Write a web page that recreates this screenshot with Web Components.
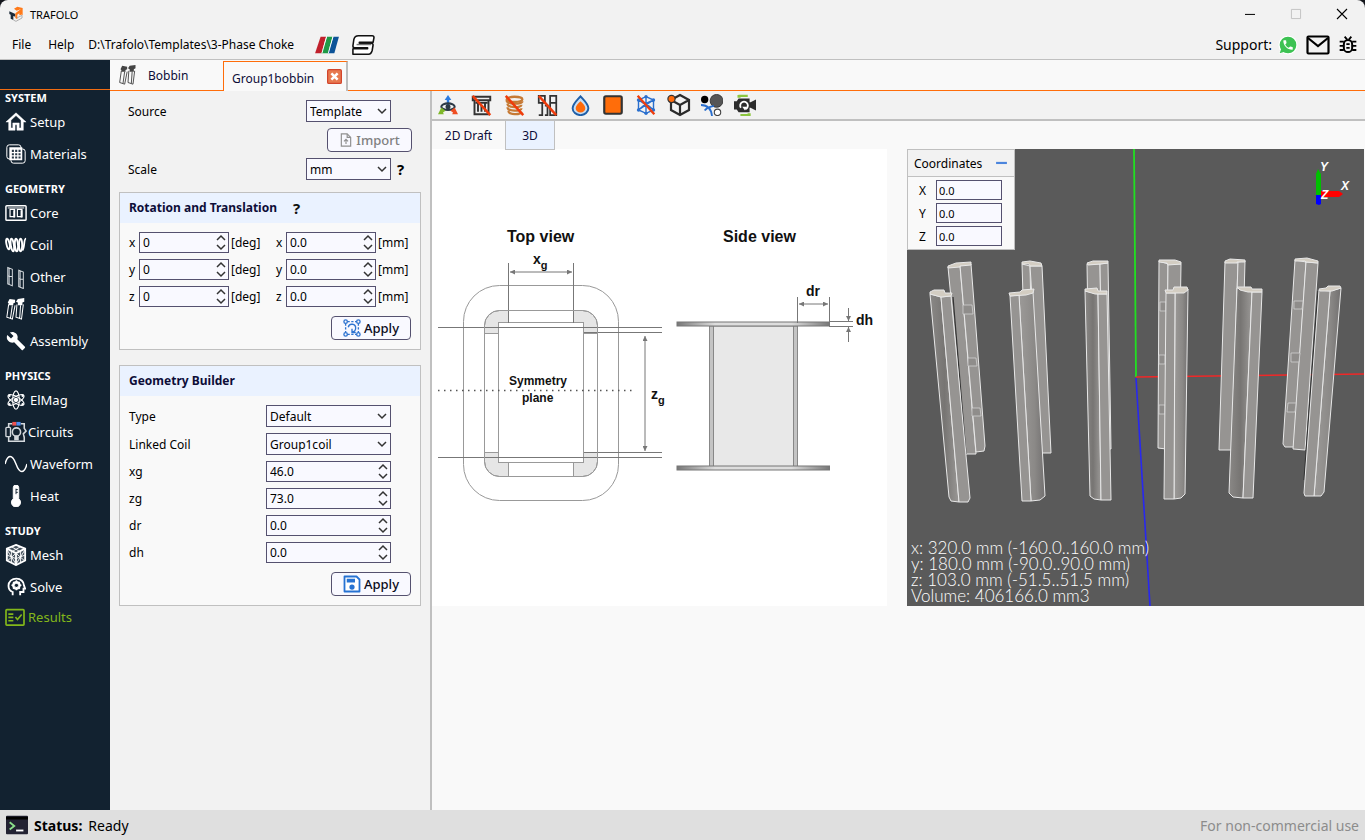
<!DOCTYPE html>
<html lang="en">
<head>
<meta charset="utf-8">
<title>TRAFOLO</title>
<style>
  html { background: #14161c; }
  body { margin: 0; font-family: "Noto Sans", sans-serif; font-size: 12px; color: #000; }
</style>
</head>
<body>
<trafolo-app></trafolo-app>
<script>
const slash = '<path d="M2 1L22 23" stroke="#ef3c0c" stroke-width="2.8"/>';
const ICONS = {
  logo: '<path d="M2 8l9 4v4l-3-1v6l-4-2v-6l-2-1z" fill="#1c2b3a"/><path d="M11 11l9-7v9l-3 1v-3l-3 2v7l-3-2z" fill="#ff7a1a"/><path d="M9 4l5-3 8 2v11l-3-2V5l-6 2z" fill="#ff7a1a"/><path d="M8 21l4 2 9-5v-4l-8 4" fill="none" stroke="#aaa" stroke-width="1.4"/>',
  stripes: '<path d="M6 3h6L7 21H0z" fill="#c0202c"/><path d="M13 3h6l-5 18H7z" fill="#1f9a47"/><path d="M20 3h6l-5 18h-7z" fill="#0c5398"/><path d="M12 3h1L8 21H7zM19 3h1l-5 18h-1z" fill="#fff"/>',
  sletter: '<path d="M8 2h15q2 0 2 2l-1 5H9v1h13q2 0 2 2l-1 6q-1 4-4 4H2l0-6h16v-1H4q-2 0-2-2l1-7q1-4 5-4z" fill="#fff" stroke="#111" stroke-width="1.700" stroke-linejoin="round"/><path d="M6 11.500h16" stroke="#777" stroke-width="1.500"/>',
  min: '<path d="M6 12.500h12" stroke="#000" stroke-width="1.2"/>',
  max: '<path d="M6.500 6.500h11v11h-11z" fill="none" stroke="#c4c4c4" stroke-width="1.2"/>',
  close: '<path d="M6 6l12 12M18 6L6 18" stroke="#000" stroke-width="1.300"/>',
  whatsapp: '<circle cx="12" cy="12" r="11.500" fill="#fff"/><path d="M1 23l2-6 5 4z" fill="#fff"/><circle cx="12" cy="12" r="10" fill="#3dc253"/><path d="M2 22l2-6 4 4z" fill="#3dc253"/><path transform="translate(4.500 4.500) scale(.63)" d="M6.620 10.790c1.440 2.830 3.760 5.140 6.590 6.590l2.200-2.200c.27-.27.67-.36 1.020-.24 1.120.37 2.330.57 3.570.57.55 0 1 .45 1 1V20c0 .55-.45 1-1 1-9.390 0-17-7.610-17-17 0-.55.45-1 1-1h3.500c.55 0 1 .45 1 1 0 1.250.2 2.450.57 3.570.11.35.03.74-.25 1.020z" fill="#fff"/>',
  mail: '<rect x="1.500" y="3.500" width="21" height="17" rx="1" fill="none" stroke="#000" stroke-width="2.200"/><path d="M2 5l10 8 10-8" fill="none" stroke="#000" stroke-width="2.200"/>',
  bug: '<rect x="7" y="6" width="10" height="14.500" rx="5" fill="none" stroke="#000" stroke-width="2.400"/><path d="M8 2l3 3.500M16 2l-3 3.500M2 8h5M17 8h5M2 13h5M17 13h5M2 18h5M17 18h5M10 11h4M10 15.500h4" stroke="#000" stroke-width="2.200"/>',
  home: '<path d="M12 2L1 12h3v9h7v-6h2v6h7v-9h3zm0 3l5.500 5v8.500h-2V13h-7v5.500h-2V10z" fill="#fff" stroke="#fff" stroke-width=".5"/>',
  materials: '<g fill="none" stroke="#fff" stroke-width="1.200"><rect x="1" y="1" width="17" height="17" rx="3"/><rect x="6" y="6" width="17" height="17" rx="3"/></g><path d="M4 4h15.500v15.500H4z" fill="#fff"/><path d="M7 7h2.500v2.500H7zM11 7h2.500v2.500H11zM15 7h2.500v2.500H15zM7 11h2.500v2.500H7zM11 11h2.500v2.500H11zM15 11h2.500v2.500H15zM7 15h2.500v2.500H7zM11 15h2.500v2.500H11zM15 15h2.500v2.500H15z" fill="#2a3a48"/>',
  core: '<rect x="1" y="4" width="22" height="16" rx="1" fill="none" stroke="#fff" stroke-width="1.600"/><path d="M3 6.500h18" stroke="#fff" stroke-width="1"/><path d="M5.500 8h5v8h-5zM13.500 8h5v8h-5z" fill="none" stroke="#fff" stroke-width="1.300"/><path d="M9 9h2v8H9zM17 9h2v8h-2z" fill="#fff"/>',
  coil: '<g fill="none" stroke="#fff" stroke-width="2"><ellipse cx="3.500" cy="11" rx="1.700" ry="6" transform="rotate(-12 3 12)"/><ellipse cx="8" cy="12" rx="1.700" ry="7" transform="rotate(-8 8 12)"/><ellipse cx="12.500" cy="12" rx="1.700" ry="7" transform="rotate(-4 12 12)"/><ellipse cx="17" cy="12" rx="1.700" ry="7"/><path d="M23 5c-3 0-1 9-4 13"/></g>',
  other: '<g fill="none" stroke="#d3d8dc" stroke-width="1.100"><path d="M3 1l5 2v18l-5-2zM4.500 2v18M3 10l5 1M15 4l5 2v18l-5-2zM16.500 5v18M15 13l5 1"/></g>',
  bobbin: '<path d="M5 1l6 1v3l-2 1v2H4V6L3 5zM14 1l7-1v4l-2 1v3h-5V5l-2-1z" fill="currentColor"/><path d="M4 7L2 21l6 2 3-15M13 7l-1 14 6 2 2-16M8 8L6 22M17 8l-1 14" fill="none" stroke="currentColor" stroke-width="1.100"/>',
  wrench: '<path d="M22.700 19l-9.100-9.100c.9-2.300.4-5-1.500-6.900-2-2-5-2.400-7.400-1.300L9 6 6 9 1.600 4.700C.4 7.100.9 10.100 2.900 12.100c1.900 1.900 4.600 2.400 6.900 1.500l9.100 9.100c.4.4 1 .4 1.400 0l2.300-2.300c.5-.4.5-1.100.1-1.400z" fill="#fff"/>',
  atom: '<g fill="none" stroke="#fff" stroke-width="1.300"><ellipse cx="12" cy="12" rx="4" ry="11"/><ellipse cx="12" cy="12" rx="4" ry="11" transform="rotate(60 12 12)"/><ellipse cx="12" cy="12" rx="4" ry="11" transform="rotate(120 12 12)"/></g><circle cx="12" cy="12" r="2.600" fill="#fff"/><g fill="#fff"><circle cx="4" cy="7" r="1.500"/><circle cx="20" cy="7" r="1.500"/><circle cx="4" cy="17" r="1.500"/><circle cx="20" cy="17" r="1.500"/></g>',
  circuits: '<path d="M8 3H4v4M4 17v5h17v-5M17 3h4v5l2 3-3 3 1 4" fill="none" stroke="#d3d8dc" stroke-width="1.700"/><rect x="1" y="7" width="5" height="10" rx="1" fill="none" stroke="#d3d8dc" stroke-width="1.500"/><rect x="8" y="1" width="4.500" height="4" fill="#f0524f"/><rect x="12.500" y="1" width="4.500" height="4" fill="#4b8df0"/><circle cx="12.500" cy="12" r="4.500" fill="none" stroke="#d3d8dc" stroke-width="1.700"/><path d="M10 16h5v5h-5z" fill="#d3d8dc"/>',
  wave: '<path d="M0 12C3 1 8 1 12 12s9 11 12 0" fill="none" stroke="#fff" stroke-width="1.600"/>',
  heat: '<path d="M9 3a3 3 0 0 1 6 0v12a5 5 0 1 1-6 0z" fill="#fff" stroke="#fff"/><path d="M12 4v6M12 5h2M12 8h2" stroke="#122230" stroke-width="1"/>',
  mesh: '<path d="M12 1l10 4v13l-10 5-10-5V5z" fill="#44515c" stroke="#fff" stroke-width="2"/><path d="M2 5l10 5 10-5M12 10v13" fill="none" stroke="#fff" stroke-width="2"/><path d="M7 3l9 5M17 3L8 8M2 12l10 4 10-4M7 8v12M17 8v12M2 6l10 16M22 6L12 22M3 18l8-7M21 18l-8-7" fill="none" stroke="#fff" stroke-width="1"/>',
  solve: '<path d="M8 22v-4c-3-1-5-4-5-7.500C3 5.500 7 2 12.500 2 18 2 21.500 6 21.500 10l1.500 4h-2v4h-4v4" fill="none" stroke="#fff" stroke-width="2.200"/><circle cx="12.500" cy="10" r="4" fill="none" stroke="#fff" stroke-width="2.500"/><g stroke="#fff" stroke-width="1.800"><path d="M12.500 4v12M6.500 10h12M8.500 6l8 8M16.500 6l-8 8"/></g><circle cx="12.500" cy="10" r="2" fill="#122230"/>',
  results: '<rect x="1.200" y="3.200" width="21.600" height="18.600" rx="1" fill="none" stroke="#83b81a" stroke-width="2"/><path d="M4 8.500h6M4 12.500h6M4 16.500h6" stroke="#83b81a" stroke-width="2"/><path d="M12.500 12l2.500 3 5-6" fill="none" stroke="#83b81a" stroke-width="2"/>',
  tabclose: '<rect x="1" y="1" width="22" height="22" rx="2" fill="#e87a50" stroke="#d2452c" stroke-width="2"/><path d="M7 7l10 10M17 7L7 17" stroke="#fff" stroke-width="4"/>',
  import: '<path d="M4 1.500h10l6 6v15H4z" fill="none" stroke="#909090" stroke-width="2"/><path d="M14 1.500v6h6" fill="none" stroke="#909090" stroke-width="2"/><path d="M12 19v-8M8.500 14.500L12 11l3.500 3.500" fill="none" stroke="#909090" stroke-width="2"/>',
  transform: '<g fill="none" stroke="#2f74d0" stroke-width="1.800"><circle cx="3.500" cy="3.500" r="2.300"/><circle cx="20.500" cy="3.500" r="2.300"/><circle cx="3.500" cy="20.500" r="2.300"/><circle cx="20.500" cy="20.500" r="2.300"/><path d="M6 3.500h12M6 20.500h12M3.500 6v12M20.500 6v12" stroke-dasharray="3 2"/><path d="M7 11a5 5 0 1 1 5 6M12 13v5h5"/></g>',
  save: '<path d="M2 2h16l4 4v16H2z" fill="#fff" stroke="#2672d2" stroke-width="2.400" stroke-linejoin="round"/><path d="M5 5h11v5H5z" fill="#2672d2"/><circle cx="12" cy="16" r="3.500" fill="#2672d2"/>',
  view3d: '<path d="M12 12V5" stroke="#2b7be0" stroke-width="3"/><path d="M12 0l4 6H8z" fill="#2b7be0"/><ellipse cx="12" cy="14" rx="8" ry="4" fill="none" stroke="#2c3a46" stroke-width="2.500"/><circle cx="12" cy="14" r="3" fill="#2c3a46"/><path d="M4 15l-4 8h7l-1-2 3-2z" fill="#7fb82a"/><path d="M20 15l4 8h-7l1-2-3-2z" fill="#ef4e23"/>',
  nocore: '<path d="M2 2h20v4H2zM4 6h16v16H4z" fill="#eee" stroke="#333" stroke-width="2.200"/><path d="M8 10v9M12 12v7M16 10v9M5 9h14" stroke="#333" stroke-width="2.200"/>' + slash,
  nocoil: '<g fill="none" stroke="#c67a35" stroke-width="2.600"><ellipse cx="12" cy="5" rx="9" ry="3"/><path d="M3 6c0 5 18 5 18 1M4 10c0 5 16 5 16 1M4 14c0 5 16 5 16 1M5 18c0 5 14 5 15 1"/></g>' + slash,
  nobobbin: '<path d="M2 1h7v8H2zM2 9h4v14H2M15 1h7v8h-7zM15 9v14h7V9M9 12h3v11H9" fill="none" stroke="#333" stroke-width="2"/>' + slash,
  drop: '<path d="M12 1.500C7 7 3 10.500 3 15a9 8 0 0 0 18 0C21 10.500 17 7 12 1.500z" fill="#c8def4" stroke="#1f5fa8" stroke-width="2.200"/><path d="M12 7c-3 3-5.500 5-5.500 8a5.500 5 0 0 0 11 0C17.500 12 15 10 12 7z" fill="#ff6a0a"/>',
  square: '<rect x="1.500" y="1.500" width="21" height="21" rx="2" fill="#ff6d0a" stroke="#333" stroke-width="2.600"/>',
  nomesh: '<g fill="none" stroke="#2a6fce" stroke-width="1.700"><path d="M12 2l9 4v12l-9 4-9-4V6zM3 6l9 4 9-4M12 10v12M12 2v8M3 18l9-8 9 8M3 6l18 12M21 6L3 18"/></g><g fill="#2a6fce"><circle cx="12" cy="2" r="2"/><circle cx="3" cy="6" r="2"/><circle cx="21" cy="6" r="2"/><circle cx="3" cy="18" r="2"/><circle cx="21" cy="18" r="2"/><circle cx="12" cy="22" r="2"/></g>' + slash,
  cube: '<path d="M13 2l9 5v10l-9 5-9-5V7zM4 7l9 5 9-5M13 12v10" fill="none" stroke="#2b2b2b" stroke-width="2.200"/><circle cx="4.500" cy="6" r="3.600" fill="#ff6a0a" stroke="#333" stroke-width="1.200"/>',
  balls: '<circle cx="4" cy="6" r="4" fill="#000"/><circle cx="17" cy="7.500" r="7" fill="#555" stroke="#333"/><circle cx="18" cy="20" r="3.500" fill="#fff" stroke="#444" stroke-width="1.200"/><path d="M0 12c7 0 11 3 12 12M4 18c3-4 7-4 10-5" fill="none" stroke="#2a6fce" stroke-width="2"/>',
  camera: '<path d="M5 5h12v4h1l6-3v12l-6-3h-1v5H5l-2-3H0V8h3z" fill="#2c2c2c"/><path d="M7.500 15a4.200 4.200 0 1 1 5 1.500" fill="none" stroke="#fff" stroke-width="2"/><path d="M9 14l5 0-2 4z" fill="#fff"/><path d="M6 4V2h9M5 1v3M16 21v2H7M17 24v-3" fill="none" stroke="#8cc63f" stroke-width="2.400"/>',
  terminal: '<rect x="0" y="2" width="24" height="20" rx="1" fill="#223"/><path d="M0 3h24v3H0z" fill="#000"/><path d="M4 9l5 4-5 4" fill="none" stroke="#8be08b" stroke-width="2"/><path d="M11 18h8" stroke="#fff" stroke-width="2"/>',
  collapse: '<path d="M2 11h20" stroke="#4b85dd" stroke-width="4"/>'
};

function define(name, css, html, after) {
  const t = document.createElement('template');
  customElements.define(name, class extends HTMLElement {
    constructor() { super(); this.attachShadow({ mode: 'open' }); }
    connectedCallback() {
      const a = (k, d = '') => this.getAttribute(k) ?? d;
      t.innerHTML = `<style>*{box-sizing:border-box}${css}</style>` + (typeof html === 'function' ? html(a) : html);
      this.shadowRoot.replaceChildren(t.content.cloneNode(true));
      if (after) after(this.shadowRoot, a);
    }
  });
}

define('ui-icon', `
  :host { display: inline-flex; flex: none; }
  svg { display: block; }`,
  a => { const w = a('w', a('size', '20')), h = a('size', '20'), box = a('box', '24');
    return `<svg width="${w}" height="${h}" viewBox="0 0 ${box} 24" aria-hidden="true">${ICONS[a('name')]}</svg>`; });

define('title-bar', `
  :host { display: flex; align-items: center; height: 28px; padding-left: 8px; }
  .name { flex: 1; padding-left: 6px; font-size: 11px; }
  button { width: 46px; height: 28px; padding: 0; border: 0; background: none; display: flex; align-items: center; justify-content: center; }`,
  `<ui-icon name="logo" size="16"></ui-icon><span class="name"><slot></slot></span>
   <button aria-label="Minimize"><ui-icon name="min"></ui-icon></button>
   <button aria-label="Maximize"><ui-icon name="max"></ui-icon></button>
   <button aria-label="Close"><ui-icon name="close"></ui-icon></button>`);

define('menu-bar', `
  :host { display: flex; align-items: center; height: 32px; padding: 2px 7px 0 12px; border-bottom: 1px solid #c0c0c0; box-sizing: border-box; }
  button { border: 0; background: none; padding: 0; font: inherit; margin-right: 17px; }
  .path { margin: 0 20px 0 -3px; }
  .right { margin-left: auto; display: flex; align-items: center; gap: 8px; }
  .label { font-size: 14px; margin-right: -2px; }
  .logos { display: flex; gap: 10px; }
  a { display: flex; }`,
  `<button>File</button><button>Help</button><span class="path">D:\\Trafolo\\Templates\\3-Phase Choke</span>
   <span class="logos"><ui-icon name="stripes" w="26" size="22" box="26"></ui-icon><ui-icon name="sletter" w="26" size="22" box="26"></ui-icon></span>
   <span class="right"><span class="label">Support:</span>
   <a href="#whatsapp" aria-label="WhatsApp"><ui-icon name="whatsapp" size="20"></ui-icon></a>
   <a href="#mail" aria-label="Mail"><ui-icon name="mail" size="24" w="24"></ui-icon></a>
   <a href="#bug" aria-label="Report a bug"><ui-icon name="bug" size="20"></ui-icon></a></span>`);

define('nav-section', `
  :host { display: block; }
  h2 { margin: 0; padding-left: 5px; font-size: 11px; line-height: 16px; font-weight: 700; color: #fff; }`,
  a => `<h2>${a('label')}</h2><slot></slot>`);

define('nav-item', `
  :host { display: block; }
  a { display: flex; align-items: center; gap: 3px; height: 32px; padding-left: 5px; color: #fff; text-decoration: none; font-size: 13px; }
  :host([current]) a { color: #83b81a; height: 28px; }
  :host([tight]) a { gap: 1px; }
  ui-icon { width: 22px; justify-content: center; }
  :host([current]) ui-icon { justify-content: flex-start; }`,
  a => `<a href="#${a('icon')}"><ui-icon name="${a('icon')}" size="${a('size', '20')}"></ui-icon><slot></slot></a>`);

define('side-nav', `
  :host { display: flex; flex-direction: column; gap: 11px; background: #122230; }
  .cap { height: 30px; border-bottom: 1px solid #f26d12; margin-bottom: -11px; }`,
  `<div class="cap"></div><slot></slot>`);

define('doc-tabs', `
  :host { display: flex; height: 31px; background: #f9f9f9; }
  .tab { display: flex; align-items: center; border: 0; background: none; font: inherit; color: #0d0d38; padding: 0; }
  .a { width: 113px; padding-left: 8px; gap: 10px; border-bottom: 1px solid #ff6d0a; color: #444; }
  .a span { color: #0d0d38; }
  .b { width: 125px; padding: 4px 4px 0 8px; margin-top: 1px; border: solid; border-width: 1px 2px 0 1px; border-color: #ff6d0a #bdbdbd #ff6d0a #ff6d0a; justify-content: space-between; }
  .b ui-icon { padding-bottom: 4px; }
  .rest { flex: 1; border-bottom: 1px solid #ff6d0a; }`,
  `<button class="tab a"><ui-icon name="bobbin" size="20"></ui-icon><span>Bobbin</span></button>
   <button class="tab b"><span>Group1bobbin</span><ui-icon name="tabclose" size="15"></ui-icon></button>
   <span class="rest"></span>`);

define('ui-button', `
  :host { display: block; }
  button { width: 100%; height: 24px; display: flex; align-items: center; justify-content: center; gap: 3px; border: 1px solid #55516f; border-radius: 4px; background: #f9f9ff; font: 500 13px/22px "Noto Sans", sans-serif; color: #0a0a20; padding: 0; }
  button:disabled { color: #808080; }`,
  a => `<button ${a('off') ? 'disabled' : ''}><ui-icon name="${a('icon')}" size="${a('size', '14')}"></ui-icon><slot></slot></button>`);

const boxCss = `
  .box { position: relative; width: var(--w, 125px); }
  input, select { appearance: none; -moz-appearance: textfield; display: block; width: 100%; height: 21px; margin: 0; padding: 0 3px; border: 1px solid #55516f; border-radius: 0; background: #f9f9ff; font: inherit; color: #000; }
  input::-webkit-inner-spin-button { appearance: none; display: none; }
  select { height: 22px; }
  svg { position: absolute; right: 3px; top: 0; pointer-events: none; fill: none; stroke: #333; stroke-width: 1.500; }`;

define('select-field', `
  :host { display: flex; align-items: center; }
  label { width: var(--label, 137px); }${boxCss}
  .tail { padding-left: 6px; font: 700 15px "Noto Sans", sans-serif; line-height: 22px; }`,
  a => `<label for="f">${a('label')}</label><div class="box"><select id="f"><option>${a('value')}</option></select>
    <svg width="12" height="22" viewBox="0 0 12 22"><path d="M2 9l4 4 4-4"/></svg></div><span class="tail">${a('help')}</span>`);

define('spin-field', `
  :host { display: flex; align-items: center; }
  label { width: var(--label, 137px); }${boxCss}
  .unit { padding-left: 2px; }`,
  a => `<label for="f">${a('label')}</label><div class="box"><input id="f" type="number" step="any" value="${a('value')}">
    <svg width="10" height="21" viewBox="0 0 10 21"><path d="M1 8l4-4 4 4M1 13l4 4 4-4"/></svg></div><span class="unit">${a('unit')}</span>`);

define('group-box', `
  :host { display: block; border: 1px solid #c0c0c0; background: #f9f9f9; }
  h3 { margin: 0; height: 30px; padding-left: 9px; background: #eaf2ff; color: #0d0d38; font-size: 12px; line-height: 30px; font-weight: 700; display: flex; gap: 16px; }
  h3 span { color: #111; font-size: 15px; }
  .body { padding: 9px; display: flex; flex-direction: column; gap: 6px; }`,
  a => `<h3>${a('label')} <span>${a('help')}</span></h3><div class="body"><slot></slot></div>`);

define('settings-panel', `
  :host { display: flex; flex-direction: column; padding: 9px; background: #f2f2f2; border-right: 2px solid #c0c0c0; box-sizing: border-box; }
  .top { display: flex; flex-direction: column; gap: 6px; padding: 0 9px 12px 9px; --label: 178px; --w: 85px; }
  ui-button { align-self: flex-end; width: 85px; }
  .apply { width: 80px; margin-top: 3px; }
  .grid { display: grid; grid-template-columns: 147px 1fr; gap: 6px 0; --label: 10px; --w: 90px; }
  group-box { margin-bottom: 15px; }`,
  `<div class="top"><select-field label="Source" value="Template"></select-field>
   <ui-button off="1" icon="import">Import</ui-button>
   <select-field label="Scale" value="mm" help="?"></select-field></div>
   <group-box label="Rotation and Translation" help="?">
     <div class="grid">${['x', 'y', 'z'].map(k => `<spin-field label="${k}" value="0" unit="[deg]"></spin-field><spin-field label="${k}" value="0.0" unit="[mm]"></spin-field>`).join('')}</div>
     <ui-button class="apply" icon="transform" size="18">Apply</ui-button>
   </group-box>
   <group-box label="Geometry Builder">
     <select-field label="Type" value="Default"></select-field>
     <select-field label="Linked Coil" value="Group1coil"></select-field>
     <spin-field label="xg" value="46.0"></spin-field><spin-field label="zg" value="73.0"></spin-field>
     <spin-field label="dr" value="0.0"></spin-field><spin-field label="dh" value="0.0"></spin-field>
     <ui-button class="apply" icon="save" size="18">Apply</ui-button>
   </group-box>`);

define('tool-bar', `
  :host { display: flex; gap: 9px; align-items: center; height: 30px; padding: 0 4px; background: #f2f2f2; border-bottom: 2px solid #c0c0c0; box-sizing: border-box; }
  button { border: 0; background: none; padding: 0; width: 24px; height: 24px; display: flex; align-items: center; justify-content: center; }`,
  () => [['view3d', 'Rotate view', 20], ['nocore', 'Hide core', 21], ['nocoil', 'Hide coil', 21], ['nobobbin', 'Hide bobbin', 21], ['drop', 'Opacity', 21], ['square', 'Surface', 20], ['nomesh', 'Hide mesh', 20], ['cube', 'Vertex', 24], ['balls', 'Select', 22], ['camera', 'Reset camera', 22]]
    .map(([i, l, s]) => `<button aria-label="${l}"><ui-icon name="${i}" size="${s}"></ui-icon></button>`).join(''));

define('view-tabs', `
  :host { display: flex; height: 28px; }
  button { border: 1px solid transparent; border-top: 0; background: none; font: inherit; color: #0d0d38; padding: 0; width: 73px; height: 29px; position: relative; }
  .on { width: 50px; border-color: #c0c0c0; background: #eaf2ff; z-index: 1; }`,
  `<button>2D Draft</button><button class="on">3D</button>`);

define('bobbin-diagram', `
  :host { display: block; background: #fff; }
  svg { display: block; width: 100%; height: auto; }
  .l { fill: none; stroke: #999; }
  .d { stroke: #777; }
  text { font-family: "Liberation Sans", Arial, sans-serif; font-weight: 700; fill: #111; }`,
  `<svg viewBox="432 149 455 457" role="img" aria-label="Bobbin dimensions">
    <defs>
      <linearGradient id="fl"><stop offset="0" stop-color="#777"/><stop offset=".25" stop-color="#ddd"/><stop offset=".75" stop-color="#ddd"/><stop offset="1" stop-color="#777"/></linearGradient>
      <marker id="ar" viewBox="0 0 6 6" refX="6" refY="3" markerWidth="6" markerHeight="5" orient="auto-start-reverse" markerUnits="userSpaceOnUse"><path d="M0 0l6 3-6 3z" fill="#777"/></marker>
    </defs>
    <text x="507" y="242" font-size="16">Top view</text>
    <text x="723" y="242" font-size="16">Side view</text>
    <text x="533" y="264" font-size="14">x<tspan dy="5" font-size="11">g</tspan></text>
    <text x="651" y="399" font-size="14">z<tspan dy="5" font-size="11">g</tspan></text>
    <text x="806" y="296" font-size="14">dr</text>
    <text x="856" y="325" font-size="14">dh</text>
    <rect class="l" x="463.500" y="285.500" width="155" height="215" rx="36"/>
    <rect x="484.500" y="310.500" width="113" height="166" rx="15" fill="#e6e6e6" stroke="#999"/>
    <path d="M508.500 311h65v165h-65z" fill="#fff"/><path d="M485 333.500h112v119H485z" fill="#fff"/>
    <path class="l" d="M508.500 311v165M573.500 311v165M485 333.500h112M485 452.500h112"/>
    <rect class="l" x="498.500" y="322.500" width="85" height="140" style="fill:#fff"/>
    <path class="l d" d="M508.500 263v60M573.500 263v60M438 327.500h224M438 457.500h224M584 332.500h78M584 452.500h78"/>
    <rect class="l" x="484.500" y="310.500" width="113" height="166" rx="15"/>
    <path class="l d" d="M510 272h62" marker-start="url(#ar)" marker-end="url(#ar)"/>
    <path class="l d" d="M645 336v115" marker-start="url(#ar)" marker-end="url(#ar)"/>
    <path d="M438 390.500h197" stroke="#555" stroke-width="1.400" stroke-dasharray="1.500 4.500"/>
    <g font-size="12"><text x="509" y="385">Symmetry</text><text x="522" y="402">plane</text></g>
    <path d="M709.500 326h87.500v141h-87.500z" fill="#e8e8e8" stroke="#888"/>
    <path d="M709.500 326h4v141h-4zM793.500 326h4v141h-4z" fill="#c4c4c4" stroke="#888"/>
    <rect x="677" y="322" width="152.500" height="4" fill="url(#fl)" stroke="#777"/>
    <rect x="677" y="466" width="152.500" height="4" fill="url(#fl)" stroke="#777"/>
    <path class="l d" d="M797.500 297v26M829.500 297v29M829 321.500h24M829 326.500h24"/>
    <path class="l d" d="M799 304h29" marker-start="url(#ar)" marker-end="url(#ar)"/>
    <path class="l d" d="M848.500 308v13" marker-end="url(#ar)"/><path class="l d" d="M848.500 342v-15" marker-end="url(#ar)"/>
  </svg>`);

/* Each half-bobbin: flat and curved side faces, end cap, and cut-out marks on the far row. */
const BARS = [
  { flat: ['948,267 960,266 976,454 966,454', '960,265 971,264 985,446 984,451 976,452'], cap: '948,266 956,263 971,262 971,265 960,266 960,267 948,268', cuts: ['963,305 972,305 973,314 963,314', '968,358 976,358 977,366 968,366', '972,408 980,408 981,416 972,416'] },
  { flat: ['1022,264 1030,266 1034,453 1028,453', '1030,266 1042,266 1051,453 1042,453'], cap: '1022,262 1030,261 1041,263 1042,266 1030,266 1029,264 1022,264' },
  { flat: ['1087,264 1100,264 1103,449 1090,449', '1100,264 1108,263 1111,449 1103,449'], cap: '1087,263 1093,261 1108,261 1108,263 1100,264 1088,265' },
  { flat: ['1159,261 1168,264 1166,449 1158,448', '1168,264 1181,264 1178,450 1166,449'], cap: '1159,260 1175,260 1181,262 1181,264 1168,265 1167,263 1159,262', cuts: ['1160,302 1166,302 1166,311 1160,311', '1159,355 1165,355 1165,364 1159,364', '1159,405 1165,405 1165,414 1159,414'] },
  { flat: ['1225,262 1238,262 1232,450 1219,450', '1238,262 1245,261 1240,450 1232,450'], cap: '1225,261 1230,259 1245,260 1245,262 1237,262 1237,263 1225,263' },
  { flat: ['1295,260 1306,262 1294,447 1285,447 1283,444', '1306,262 1318,263 1305,450 1293,449'], cap: '1295,259 1307,258 1318,261 1318,263 1306,262 1305,261 1295,261', cuts: ['1294,301 1303,301 1302,309 1294,309', '1291,353 1300,353 1299,362 1291,362', '1288,403 1296,403 1295,412 1287,412'] },
  { round: 'l', curve: '930,294 941,297 959,502 951,501 949,497', flat: ['941,297 951,296 970,498 968,502 959,502'], cap: '930,292 934,290 944,290 945,293 952,293 951,296 941,297 930,294', shade: 'M953 297L966 454' },
  { round: 'r', curve: '1019,295 1033,292 1045,496 1040,500 1031,501', flat: ['1010,296 1019,295 1031,501 1022,501'], cap: '1009,293 1020,292 1022,290 1034,289 1033,293 1026,295 1010,296' },
  { round: 'l', curve: '1085,291 1098,294 1101,500 1094,499 1090,496', flat: ['1098,294 1107,294 1111,500 1101,500'], cap: '1085,289 1097,288 1098,291 1107,291 1107,294 1095,294 1085,291' },
  { round: 'r', curve: '1175,293 1188,289 1185,494 1181,498 1174,499', flat: ['1166,293 1175,293 1174,499 1164,499'], cap: '1165,290 1173,290 1174,287 1187,287 1188,290 1184,293 1166,293' },
  { round: 'l', curve: '1237,288 1252,292 1243,498 1233,497 1229,493', flat: ['1252,292 1262,292 1253,498 1243,498'], cap: '1237,287 1251,287 1252,289 1262,289 1262,292 1248,292 1240,290' },
  { round: 'r', curve: '1330,291 1341,288 1324,492 1321,496 1314,496', flat: ['1319,290 1330,291 1314,496 1305,496 1304,493'], cap: '1319,289 1326,288 1328,286 1340,286 1341,288 1332,291 1320,291', shade: 'M1318 291L1304 480' }
];
const drawBar = b => `${b.shade ? `<path d="${b.shade}" stroke="#333" stroke-width="1.200"/>` : ''}
  ${b.curve ? `<polygon points="${b.curve}" fill="url(#${b.round})"/>` : ''}
  ${b.flat.map(p => `<polygon points="${p}" fill="#969492"/>`).join('')}
  ${(b.cuts || []).map(p => `<polygon points="${p}" fill="#8f8d8b" stroke="#d0d0d0" stroke-width=".8"/>`).join('')}
  <polygon points="${b.cap}" fill="#d3cdc2"/>`;

define('coord-box', `
  :host { display: block; width: 108px; box-sizing: border-box; border: 1px solid #c0c0c0; background: #f9f9f9; color: #000; }
  header { display: flex; align-items: center; justify-content: space-between; height: 27px; padding: 0 6px; background: #f2f2f2; border-bottom: 1px solid #c0c0c0; }
  button { border: 0; padding: 0; background: none; display: flex; }
  .rows { display: grid; grid-template-columns: 17px 66px; gap: 3px 0; padding: 3px 0 3px 11px; align-items: center; }
  input { width: 66px; height: 20px; margin: 0; padding: 0 2px; border: 1px solid #55516f; background: #f9f9ff; font: inherit; font-size: 11px; }`,
  `<header><span>Coordinates</span><button aria-label="Collapse"><ui-icon name="collapse" size="13"></ui-icon></button></header>
   <div class="rows">${['X', 'Y', 'Z'].map(k => `<label for="${k}">${k}</label><input id="${k}" value="0.0">`).join('')}</div>`);

define('scene-view', `
  :host { display: block; position: relative; background: #5a5a5a; }
  svg { display: block; width: 100%; height: auto; }
  coord-box { position: absolute; left: 0; top: 0; }
  .info { position: absolute; left: 4px; bottom: 2px; color: #fff; font: 300 17px/16px Lato, sans-serif; white-space: pre; }
  .bar { stroke: #e8e8e8; stroke-width: 1; stroke-linejoin: round; }
  text { font: italic 700 12px "Liberation Sans", sans-serif; fill: #fff; }`,
  `<svg viewBox="907 149 457 457" role="img" aria-label="3D model">
    <defs><linearGradient id="l"><stop offset="0" stop-color="#8a8886"/><stop offset=".5" stop-color="#777573"/><stop offset="1" stop-color="#9a9896"/></linearGradient>
    <linearGradient id="r"><stop offset="0" stop-color="#9c9a98"/><stop offset=".6" stop-color="#8b8987"/><stop offset="1" stop-color="#727070"/></linearGradient></defs>
    <path d="M1134 149l2 228" stroke="#20e020" stroke-width="1.800"/>
    <path d="M1136 377l228-3" stroke="#f02828" stroke-width="1.400"/>
    <path d="M1136 378l14 228" stroke="#2828f0" stroke-width="1.600"/>
    <g class="bar">${BARS.map(drawBar).join('')}</g>
    <path d="M1321 191h18l4 3-4 3h-18z" fill="#f00"/><path d="M1316 195v-21l2-5 3 5v21z" fill="#00c000"/><path d="M1316 195h5v9l-2 1-3-1z" fill="#00f"/>
    <text x="1320" y="171">Y</text><text x="1341" y="190">X</text><text x="1321" y="199">Z</text>
  </svg>
  <coord-box></coord-box>
  <div class="info">x: 320.0 mm (-160.0..160.0 mm)
y: 180.0 mm (-90.0..90.0 mm)
z: 103.0 mm (-51.5..51.5 mm)
Volume: 406166.0 mm3</div>`);

define('work-area', `
  :host { display: block; background: #f9f9f9; }
  .panes { display: grid; grid-template-columns: 455fr 457fr; gap: 20px; padding-right: 1px; align-items: start; }`,
  `<tool-bar></tool-bar><view-tabs></view-tabs>
   <div class="panes"><bobbin-diagram></bobbin-diagram><scene-view></scene-view></div>`);

define('status-bar', `
  :host { display: flex; align-items: center; height: 30px; padding: 0 6px; gap: 6px; background: #dfdfdf; box-sizing: border-box; font-size: 14px; }
  .note { margin-left: auto; color: #8c8c8c; }`,
  `<ui-icon name="terminal" size="22"></ui-icon><b>Status:</b><span>Ready</span><span class="note">For non-commercial use</span>`);

define('trafolo-app', `
  :host { display: grid; grid-template-rows: auto 1fr auto; min-height: 100vh; background: #f2f2f2; border-radius: 8px 8px 0 0; overflow: hidden; }
  .main { display: grid; grid-template-columns: 110px minmax(0, 1fr); }
  .right { display: grid; grid-template-rows: auto 1fr; }
  .content { display: grid; grid-template-columns: 322px minmax(0, 1fr); }`,
  `<header><title-bar>TRAFOLO</title-bar><menu-bar></menu-bar></header>
   <div class="main">
    <side-nav>
      <nav-section label="SYSTEM"><nav-item icon="home" size="22">Setup</nav-item><nav-item icon="materials">Materials</nav-item></nav-section>
      <nav-section label="GEOMETRY"><nav-item icon="core" size="22">Core</nav-item><nav-item icon="coil" size="22">Coil</nav-item><nav-item icon="other" size="23">Other</nav-item><nav-item icon="bobbin" size="22">Bobbin</nav-item><nav-item icon="wrench">Assembly</nav-item></nav-section>
      <nav-section label="PHYSICS"><nav-item icon="atom">ElMag</nav-item><nav-item icon="circuits" size="22" tight>Circuits</nav-item><nav-item icon="wave" size="22">Waveform</nav-item><nav-item icon="heat" size="22">Heat</nav-item></nav-section>
      <nav-section label="STUDY"><nav-item icon="mesh" size="22">Mesh</nav-item><nav-item icon="solve">Solve</nav-item><nav-item icon="results" current tight>Results</nav-item></nav-section>
    </side-nav>
    <div class="right"><doc-tabs></doc-tabs>
      <div class="content"><settings-panel></settings-panel><work-area></work-area></div></div>
   </div>
   <status-bar></status-bar>`);
</script>
</body>
</html>
